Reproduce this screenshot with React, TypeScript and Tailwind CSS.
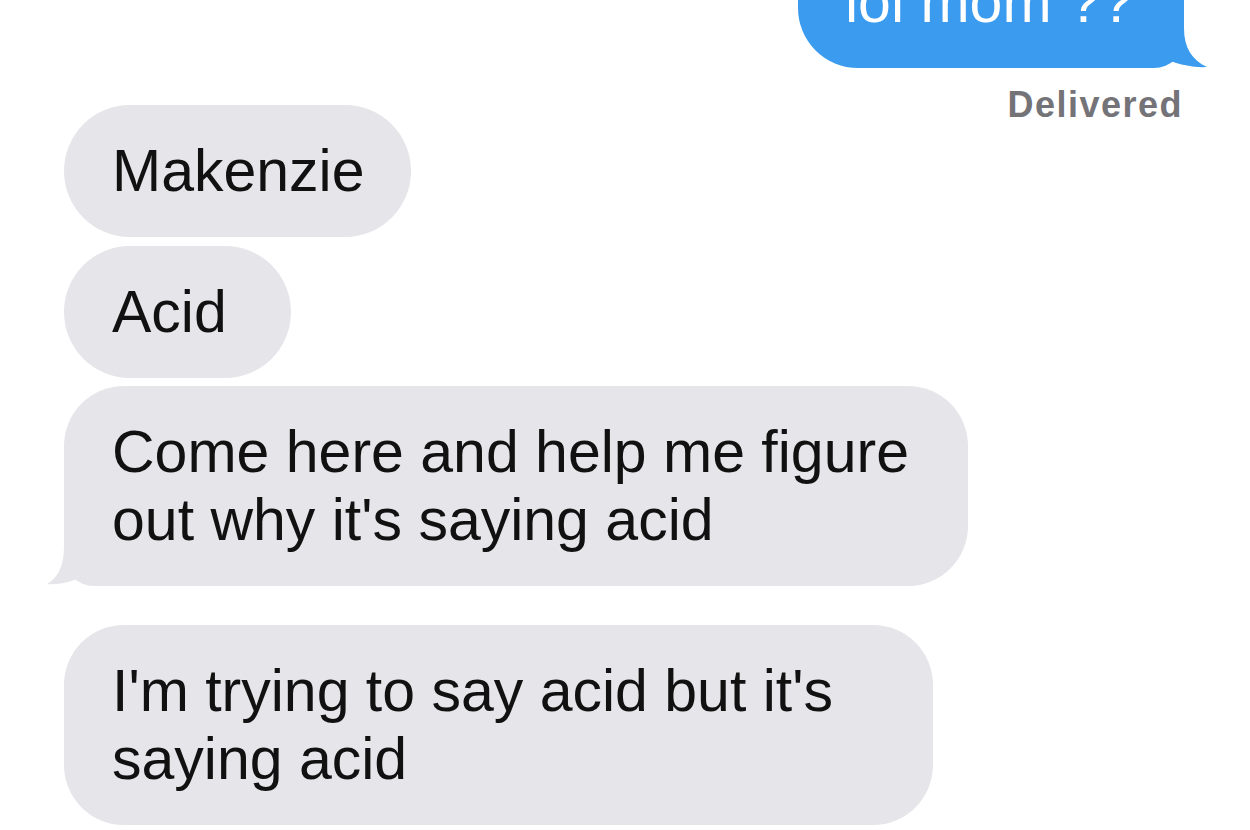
import React from "react";

const font = { fontFamily: '"Liberation Sans", Arial, Helvetica, sans-serif' };

function GrayTail() {
  return (
    <svg
      className="absolute left-[-20px] bottom-0"
      width="80"
      height="70"
      viewBox="0 0 80 70"
    >
      <path
        d="M20 30 C20 50 14 62 3 68 C14 69 28 66 39 60 C46 66 56 70 72 70 L80 70 L80 30 Z"
        fill="#e5e5ea"
      />
    </svg>
  );
}

function BlueTail() {
  return (
    <svg
      className="absolute right-[-25px] bottom-0"
      width="85"
      height="70"
      viewBox="0 0 85 70"
    >
      <path
        d="M60 30 C60 50 68 62 83 69 C70 70 50 66 38 59 C30 66 20 70 6 70 L0 70 L0 30 Z"
        fill="#3a9bef"
      />
    </svg>
  );
}

function Bubble({
  children,
  className,
  tail,
}: {
  children: React.ReactNode;
  className: string;
  tail?: boolean;
}) {
  return (
    <div
      className={
        "relative bg-[#e5e5ea] text-[#111111] text-[59px] leading-[68px] py-[32px] pl-[48px] whitespace-nowrap " +
        className
      }
    >
      {tail && <GrayTail />}
      <span className="relative">{children}</span>
    </div>
  );
}

export default function App() {
  return (
    <div
      className="w-[1250px] h-[830px] overflow-hidden bg-white flex flex-col"
      style={font}
    >
      <div className="self-end mr-[66px] mt-[-64px] relative w-[386px] bg-[#3a9bef] rounded-[60px] rounded-br-[30px] text-white text-[59px] leading-[68px] py-[32px] pl-[47px] whitespace-nowrap">
        <BlueTail />
        <span className="relative">lol mom ??</span>
      </div>
      <div className="self-end mr-[67px] mt-[19px] text-[36px] leading-[36px] font-bold tracking-[1.5px] text-[#737378]">
        Delivered
      </div>

      <div className="flex flex-col items-start ml-[64px] mt-[-18px]">
        <Bubble className="w-[347px] rounded-full">Makenzie</Bubble>
        <Bubble className="mt-[9px] w-[227px] rounded-full">Acid</Bubble>
        <Bubble tail className="mt-[8px] w-[904px] rounded-[60px] rounded-bl-[30px]">
          Come here and help me figure
          <br />
          out why it's saying acid
        </Bubble>
        <Bubble className="mt-[39px] w-[869px] rounded-[60px]">
          I'm trying to say acid but it's
          <br />
          saying acid
        </Bubble>
      </div>
    </div>
  );
}
